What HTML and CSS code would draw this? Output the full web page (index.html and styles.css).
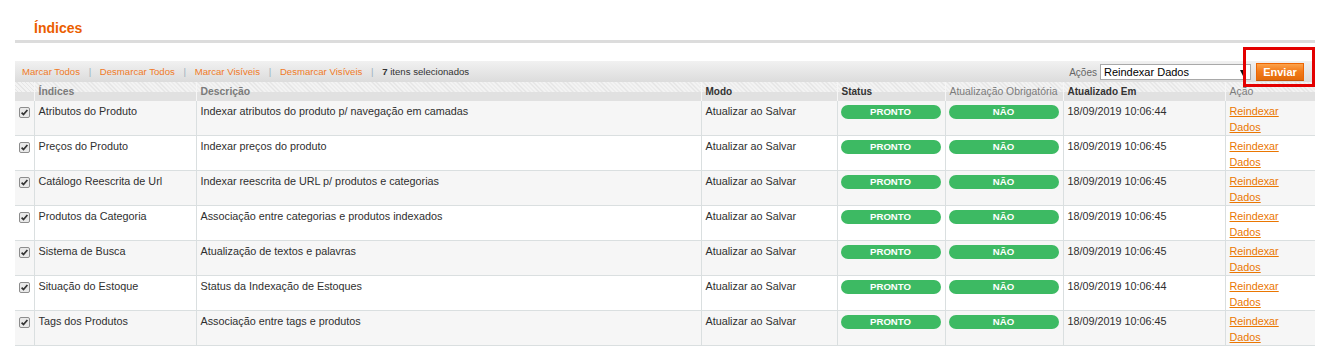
FILE: index.html
```html
<!DOCTYPE html>
<html lang="pt-BR">
<head>
    <meta charset="UTF-8">
    <title>Índices</title>
    <link rel="stylesheet" href="styles.css">
</head>
<body>
    <div class="page">
        <div class="content-header">
            <h3>Índices</h3>
        </div>

        <div class="massaction">
            <div class="mass-links">
                <a href="#">Marcar Todos</a>
                <span class="sep">|</span>
                <a href="#">Desmarcar Todos</a>
                <span class="sep">|</span>
                <a href="#">Marcar Visíveis</a>
                <span class="sep">|</span>
                <a href="#">Desmarcar Visíveis</a>
                <span class="sep">|</span>
                <span class="count"><b>7</b> itens selecionados</span>
            </div>
            <div class="mass-actions">
                <label for="acao">Ações</label>
                <span class="select-wrap">
                    <select id="acao">
                        <option>Reindexar Dados</option>
                    </select>
                </span>
                <button class="btn">Enviar</button>
            </div>
        </div>

        <table class="grid">
            <colgroup>
                <col style="width:19px">
                <col style="width:162px">
                <col style="width:505px">
                <col style="width:136px">
                <col style="width:108px">
                <col style="width:118px">
                <col style="width:162px">
                <col style="width:90px">
            </colgroup>
            <thead>
                <tr>
                    <th></th>
                    <th class="muted bold">Índices</th>
                    <th class="muted bold">Descrição</th>
                    <th class="bold">Modo</th>
                    <th class="bold">Status</th>
                    <th class="muted">Atualização Obrigatória</th>
                    <th class="bold">Atualizado Em</th>
                    <th class="muted">Ação</th>
                </tr>
            </thead>
            <tbody id="rows"></tbody>
        </table>

        <!-- destaque vermelho em volta do botao -->
        <div class="highlight"></div>
    </div>

    <script>
        const indices = [
            ['Atributos do Produto', 'Indexar atributos do produto p/ navegação em camadas', '18/09/2019 10:06:44'],
            ['Preços do Produto', 'Indexar preços do produto', '18/09/2019 10:06:45'],
            ['Catálogo Reescrita de Url', 'Indexar reescrita de URL p/ produtos e categorias', '18/09/2019 10:06:45'],
            ['Produtos da Categoria', 'Associação entre categorias e produtos indexados', '18/09/2019 10:06:45'],
            ['Sistema de Busca', 'Atualização de textos e palavras', '18/09/2019 10:06:45'],
            ['Situação do Estoque', 'Status da Indexação de Estoques', '18/09/2019 10:06:44'],
            ['Tags dos Produtos', 'Associação entre tags e produtos', '18/09/2019 10:06:45']
        ];

        const check = '<svg class="cb" width="11" height="11" viewBox="0 0 11 11">' +
            '<rect x="0.5" y="0.5" width="10" height="10" rx="1.5" fill="#e9e9e9" stroke="#8c8c8c"/>' +
            '<path d="M2.6 5.6 L4.5 7.6 L8.4 3" fill="none" stroke="#333" stroke-width="1.7"/></svg>';

        const tbody = document.getElementById('rows');
        indices.forEach((row, i) => {
            const tr = document.createElement('tr');
            tr.className = i % 2 === 0 ? 'odd' : 'even';
            tr.innerHTML =
                '<td class="cb-cell">' + check + '</td>' +
                '<td>' + row[0] + '</td>' +
                '<td>' + row[1] + '</td>' +
                '<td>Atualizar ao Salvar</td>' +
                '<td class="badge-cell"><span class="badge">PRONTO</span></td>' +
                '<td class="badge-cell"><span class="badge">NÃO</span></td>' +
                '<td>' + row[2] + '</td>' +
                '<td><a href="#">Reindexar Dados</a></td>';
            tbody.appendChild(tr);
        });
    </script>
</body>
</html>
```

FILE: styles.css
```css
body {
    margin: 0;
    font-family: 'Liberation Sans', Arial, sans-serif;
    color: #2f2f2f;
    background-color: #fff;
}

a {
    color: #ea7601;
}

.page {
    position: relative;
    padding: 20px 12px 0 15px;
}

.content-header {
    padding: 0 0 4px 19px;
    border-bottom: 3px solid #dcdcdc;
}

.content-header h3 {
    margin: 0;
    font-size: 14px;
    line-height: 16px;
    color: #eb5e00;
}

.massaction {
    margin-top: 18px;
    height: 21px;
    padding: 0 11px 0 7px;
    display: flex;
    justify-content: space-between;
    align-items: center;
    background: linear-gradient(#f1f1f1, #dcdcdc);
    font-size: 9.6px;
}

.mass-links a {
    color: #f07b28;
    text-decoration: none;
}

.mass-links .sep {
    color: #9bb0bf;
    margin: 0 6px;
}

.mass-links .count {
    color: #333;
}

.mass-actions {
    display: flex;
    align-items: center;
    margin-top: 1px;
}

.mass-actions label {
    color: #666;
    font-size: 10px;
    margin-right: 3px;
}

.select-wrap {
    position: relative;
}

.select-wrap::after {
    content: "";
    position: absolute;
    right: 5px;
    top: 6px;
    border-left: 3px solid transparent;
    border-right: 3px solid transparent;
    border-top: 6px solid #111;
}

.select-wrap select {
    appearance: none;
    width: 151px;
    height: 16px;
    padding: 0 3px;
    border: 1px solid #a9a9a9;
    border-radius: 0;
    background-color: #fff;
    font-family: 'Liberation Sans', Arial, sans-serif;
    font-size: 11px;
    color: #000;
    display: block;
}

.btn {
    margin-left: 5px;
    width: 48px;
    height: 18px;
    padding: 0;
    border: 1px solid #ed6502;
    border-bottom-color: #c4540a;
    background: linear-gradient(#fba24c, #f37b1a 45%, #e26a0b);
    color: #fff;
    font-family: 'Liberation Sans', Arial, sans-serif;
    font-size: 11px;
    font-weight: bold;
}

.grid {
    width: 1300px;
    table-layout: fixed;
    border-collapse: collapse;
    font-size: 10.8px;
}

.grid th {
    height: 19px;
    padding: 0 4px;
    text-align: left;
    font-size: 10px;
    font-weight: normal;
    color: #333;
    border-left: 1px solid #f6f6f6;
    background:
        linear-gradient(to bottom, transparent 10px, #e1e1e1 10px),
        repeating-linear-gradient(45deg, #f3f3f3 0 2px, #e5e5e5 2px 3px);
    white-space: nowrap;
}

.grid th:first-child {
    border-left: none;
}

.grid th.bold {
    font-weight: bold;
}

.grid th.muted {
    color: #7b7b7b;
    font-size: 10.4px;
}

.grid td {
    padding: 2px 4px 0;
    line-height: 16px;
    vertical-align: top;
    border-bottom: 1px solid #dadfe0;
    border-left: 1px solid #dadfe0;
}

.grid td:first-child {
    border-left: none;
}

.grid tr.odd td {
    background-color: #f6f6f6;
}

.grid tr.even td {
    background-color: #fff;
}

.grid td.cb-cell {
    padding: 0 4px;
}

.cb {
    display: block;
    margin-top: 6px;
}

.grid td.badge-cell {
    padding: 2px 4px 0 3px;
}

.badge {
    display: block;
    margin-top: 2px;
    height: 14px;
    line-height: 14px;
    border-radius: 7px;
    background-color: #3dba63;
    color: #fff;
    font-size: 9.6px;
    font-weight: bold;
    text-align: center;
}

.highlight {
    position: absolute;
    left: 1243px;
    top: 47px;
    width: 72px;
    height: 40px;
    box-sizing: border-box;
    border: 3px solid #e30000;
}
```
